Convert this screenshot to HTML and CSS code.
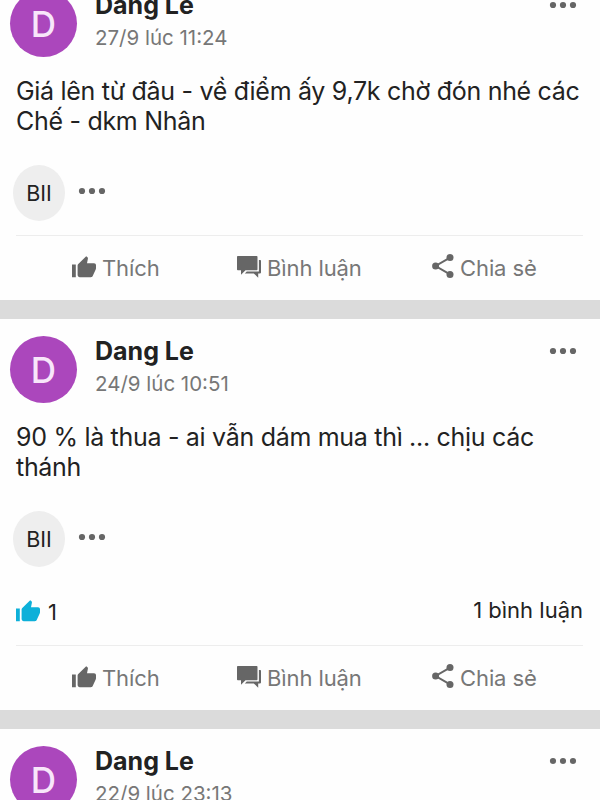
FILE: index.html
```
<!DOCTYPE html>
<html lang="vi">
  <head>
    <meta charset="UTF-8" />
    <meta name="viewport" content="width=device-width, initial-scale=1.0" />
    <title>Dang Le</title>
    <link rel="stylesheet" href="styles.css">
  </head>
  <body>
    <!-- Icons -->
    <svg class="sprite" width="0" height="0">
      <symbol id="icon-more" viewBox="0 0 28 8">
        <circle cx="4" cy="4" r="3.1" />
        <circle cx="14" cy="4" r="3.1" />
        <circle cx="24" cy="4" r="3.1" />
      </symbol>
      <symbol id="icon-like" viewBox="0 0 24 22">
        <path d="M0 8.6h3.800V21.200H0zM5.600 19V9.600c0-.6.2-1.100.7-1.500L14.200.2l1.300 1c.4.5.6 1 .4 1.600L15 7.200h7c1.200 0 2 .9 2 2v3c0 .4-.1.800-.3 1.200l-3 6.600c-.3.800-1 1.200-1.900 1.200H7.800c-1.200 0-2.200-1-2.200-2.200z" />
      </symbol>
      <symbol id="icon-comment" viewBox="0 0 24 22">
        <path d="M.8 0h18.900c.5 0 .8.300.8.800v12.600c0 .5-.3.800-.8.800H8.500L4 18.700v-4.500H.8c-.5 0-.8-.3-.8-.8V.8C0 .3.3 0 .8 0z" />
        <path d="M21.900 4h1.300c.5 0 .8.300.8.800v11.800c0 .5-.3.800-.8.800h-2v4.400l-4.400-4.400H7.800l2-2h12.100z" />
      </symbol>
      <symbol id="icon-share" viewBox="0 0 22 24">
        <path d="M18 3.600L3.600 12 18 20.400" fill="none" stroke="currentColor" stroke-width="2" />
        <circle cx="18" cy="3.600" r="3.500" />
        <circle cx="3.600" cy="12" r="3.500" />
        <circle cx="18" cy="20.400" r="3.500" />
      </symbol>
    </svg>

    <main class="feed">
      <article class="post">
        <header class="post-header">
          <div class="avatar">D</div>
          <div class="author">
            <div class="name">Dang Le</div>
            <div class="time">27/9 lúc 11:24</div>
          </div>
          <svg class="more"><use href="#icon-more" /></svg>
        </header>
        <p class="content">Giá lên từ đâu - về điểm ấy 9,7k chờ đón nhé các<br>Chế - dkm Nhân</p>
        <div class="tags">
          <span class="tag">BII</span>
          <svg class="more"><use href="#icon-more" /></svg>
        </div>
        <footer class="actions">
          <div class="action like"><svg><use href="#icon-like" /></svg><span>Thích</span></div>
          <div class="action comment"><svg><use href="#icon-comment" /></svg><span>Bình luận</span></div>
          <div class="action share"><svg><use href="#icon-share" /></svg><span>Chia sẻ</span></div>
        </footer>
      </article>

      <article class="post">
        <header class="post-header">
          <div class="avatar">D</div>
          <div class="author">
            <div class="name">Dang Le</div>
            <div class="time">24/9 lúc 10:51</div>
          </div>
          <svg class="more"><use href="#icon-more" /></svg>
        </header>
        <p class="content">90 % là thua - ai vẫn dám mua thì ... chịu các<br>thánh</p>
        <div class="tags">
          <span class="tag">BII</span>
          <svg class="more"><use href="#icon-more" /></svg>
        </div>
        <div class="stats">
          <div class="likes"><svg><use href="#icon-like" /></svg><span>1</span></div>
          <div class="comments">1 bình luận</div>
        </div>
        <footer class="actions">
          <div class="action like"><svg><use href="#icon-like" /></svg><span>Thích</span></div>
          <div class="action comment"><svg><use href="#icon-comment" /></svg><span>Bình luận</span></div>
          <div class="action share"><svg><use href="#icon-share" /></svg><span>Chia sẻ</span></div>
        </footer>
      </article>

      <article class="post">
        <header class="post-header">
          <div class="avatar">D</div>
          <div class="author">
            <div class="name">Dang Le</div>
            <div class="time">22/9 lúc 23:13</div>
          </div>
          <svg class="more"><use href="#icon-more" /></svg>
        </header>
      </article>
    </main>
  </body>
</html>
```

FILE: styles.css
```
* {
    box-sizing: border-box;
}

body {
    margin: 0;
    height: 800px;
    overflow: hidden;
    background-color: #dbdbdb;
    color: #222;
    font-family: Inter, "Liberation Sans", sans-serif;
}

svg {
    display: block;
    fill: currentColor;
}

.sprite {
    position: absolute;
}

/* The feed is scrolled part of the way into the first post */
.feed {
    display: flex;
    flex-direction: column;
    gap: 19px;
    margin-top: -27px;
}

.post {
    background-color: #fefefe;
}

.post-header {
    display: flex;
    height: 101px;
    padding: 17px 23px 0 10px;
}

.avatar {
    width: 67px;
    height: 67px;
    border-radius: 50%;
    background-color: #ab47bc;
    color: #f8e6fa;
    font-size: 35px;
    font-weight: 500;
    line-height: 69px;
    text-align: center;
}

.author {
    flex: 1;
    margin-left: 18px;
}

.name {
    font-size: 25px;
    font-weight: 700;
    line-height: 30px;
}

.time {
    margin-top: 4px;
    color: #777;
    font-size: 20.5px;
    line-height: 28px;
}

.more {
    width: 28px;
    height: 8px;
    color: #666;
}

.post-header .more {
    margin-top: 11px;
}

.content {
    margin: 0;
    padding: 2px 0 0 16px;
    font-size: 25px;
    line-height: 30px;
    letter-spacing: -0.3px;
    white-space: nowrap;
}

.tags {
    display: flex;
    align-items: center;
    height: 57px;
    margin: 28px 0 14px 13px;
}

.tag {
    width: 52px;
    height: 56px;
    border-radius: 50%;
    background-color: #eee;
    font-size: 21.5px;
    line-height: 56px;
    text-align: center;
}

.tags .more {
    margin: -3px 0 0 13px;
}

.stats {
    display: flex;
    justify-content: space-between;
    height: 64px;
    padding: 16px 17px 0 16px;
    font-size: 22px;
    line-height: 26px;
}

.likes {
    display: flex;
    gap: 8px;
    margin-top: 2px;
}

.likes svg {
    width: 24px;
    height: 22px;
    margin-top: 1px;
    color: #0db0d9;
}

.actions {
    display: flex;
    height: 65px;
    margin: 0 17px 0 16px;
    padding-top: 18px;
    border-top: 1px solid #ededed;
    color: #666;
    font-size: 22px;
    line-height: 28px;
    letter-spacing: -0.1px;
}

.action {
    display: flex;
    gap: 6px;
}

.action span {
    color: #777;
}

.action svg {
    width: 24px;
    height: 22px;
    margin-top: 2px;
}

.like {
    width: 165px;
    margin-left: 56px;
}

.comment {
    width: 195px;
}

.share svg {
    width: 22px;
    height: 24px;
    margin-top: 0;
}
```
